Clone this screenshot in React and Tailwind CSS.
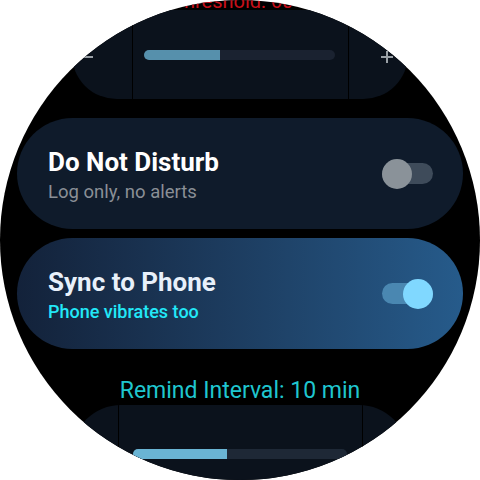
import React from "react";

function Toggle({ on }) {
  return (
    <div className="relative w-[51px] h-[30px] flex items-center">
      <div className={`w-full h-[21px] rounded-full ${on ? "bg-[#4a87b1]" : "bg-[#3e4b5a]"}`} />
      <div
        className={`absolute top-0 w-[30px] h-[30px] rounded-full ${on ? "right-0 bg-[#80d8ff]" : "left-0 bg-[#8a9299]"}`}
      />
    </div>
  );
}

function Minus() {
  return (
    <svg width="12" height="12" viewBox="0 0 12 12">
      <path d="M0 6 H12" stroke="#9aa0a6" strokeWidth="2" />
    </svg>
  );
}
function Plus() {
  return (
    <svg width="12" height="12" viewBox="0 0 12 12">
      <path d="M0 6 H12 M6 0 V12" stroke="#9aa0a6" strokeWidth="2" />
    </svg>
  );
}

export default function App() {
  return (
    <div className="w-[480px] h-[480px] bg-white" style={{ fontFamily: "Roboto, 'Noto Sans', sans-serif" }}>
      <div className="w-full h-full rounded-full bg-black overflow-hidden flex flex-col items-center">
        <div className="mt-[-10px] h-[20px] text-[20px] leading-[22px] text-[#c8101a] whitespace-nowrap">
          Threshold: 60%
        </div>

        <div className="w-[336px] h-[89px] shrink-0 rounded-full bg-[#0b121c] flex overflow-hidden">
          <div className="w-[60px] flex items-center pl-[9px] pt-[4px]">
            <Minus />
          </div>
          <div className="w-px bg-black" />
          <div className="flex-1 flex items-center pl-[11px] pr-[13px]">
            <div className="w-full h-[10px] rounded-full bg-[#1a2230] overflow-hidden">
              <div className="h-full w-[40%] bg-[#5690ac]" />
            </div>
          </div>
          <div className="w-px bg-black" />
          <div className="w-[59px] flex items-center justify-end pr-[15px] pt-[4px]">
            <Plus />
          </div>
        </div>

        <div className="mt-[19px] w-[446px] h-[111px] shrink-0 rounded-full bg-[#0f1b2b] flex items-center justify-between pl-[31px] pr-[30px]">
          <div className="flex flex-col pt-[4px]">
            <div className="text-[26px] leading-[30px] font-bold text-white">Do Not Disturb</div>
            <div className="mt-[3px] text-[18.5px] leading-[24px] text-[#8a8f96]">Log only, no alerts</div>
          </div>
          <Toggle on={false} />
        </div>

        <div className="mt-[9px] w-[446px] h-[111px] shrink-0 rounded-full bg-gradient-to-r from-[#13223a] to-[#265b8b] flex items-center justify-between pl-[31px] pr-[30px]">
          <div className="flex flex-col pt-[4px]">
            <div className="text-[26px] leading-[30px] font-bold text-[#e8f0fa]">Sync to Phone</div>
            <div className="mt-[3px] text-[18px] leading-[24px] font-medium text-[#22e8f8]">Phone vibrates too</div>
          </div>
          <Toggle on={true} />
        </div>

        <div className="mt-[28px] text-[23px] leading-[28px] text-[#1fc6cf] whitespace-nowrap">
          Remind Interval: 10 min
        </div>

        <div className="w-[336px] h-[98px] shrink-0 rounded-full bg-[#0b121c] flex overflow-hidden">
          <div className="w-[46px]" />
          <div className="w-px bg-black" />
          <div className="flex-1 flex items-center pl-[14px] pr-[15px]">
            <div className="w-full h-[10px] rounded-full bg-[#1e2836] overflow-hidden">
              <div className="h-full w-[44%] bg-[#6ab4d4]" />
            </div>
          </div>
          <div className="w-px bg-black" />
          <div className="w-[45px]" />
        </div>
      </div>
    </div>
  );
}
